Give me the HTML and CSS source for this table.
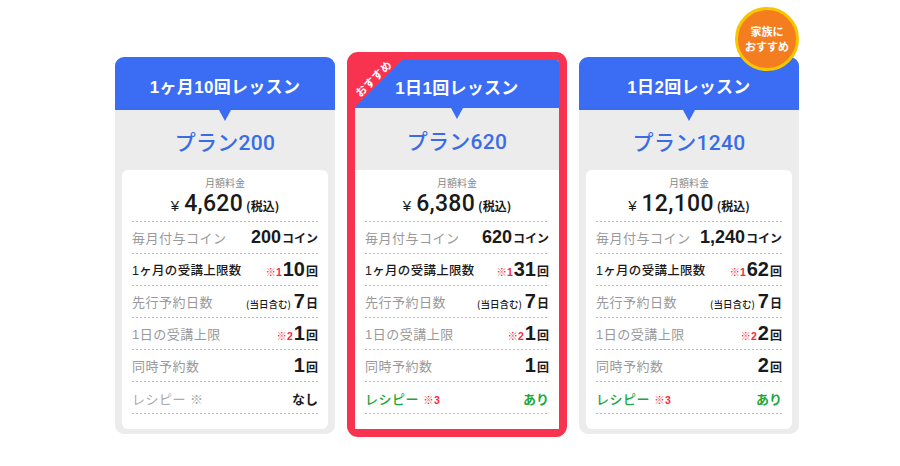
FILE: index.html
```html
<!DOCTYPE html>
<html lang="ja">
<head>
<meta charset="utf-8">
<link rel="stylesheet" href="styles.css">
</head>
<body>
<div class="plans">
  <div class="card">
    <div class="head">1ヶ月10回レッスン</div>
    <div class="title">プラン200</div>
    <div class="box">
      <div class="price">
        <div class="price-label">月額料金</div>
        <div class="price-val"><span class="yen">¥</span><span class="amount">4,620</span><span class="tax">(税込)</span></div>
      </div>
      <div class="row"><span class="label">毎月付与コイン</span><span class="val"><b class="num">200</b><b class="unit">コイン</b></span></div>
      <div class="row"><span class="label dark">1ヶ月の受講上限数</span><span class="val"><span class="note">※1</span><b class="num big">10</b><b class="unit">回</b></span></div>
      <div class="row"><span class="label">先行予約日数</span><span class="val"><span class="small">(当日含む)</span><b class="num big">7</b><b class="unit">日</b></span></div>
      <div class="row"><span class="label">1日の受講上限</span><span class="val"><span class="note">※2</span><b class="num big">1</b><b class="unit">回</b></span></div>
      <div class="row"><span class="label">同時予約数</span><span class="val"><b class="num big">1</b><b class="unit">回</b></span></div>
      <div class="row last"><span class="label light">レシピー ※</span><span class="val"><b class="word">なし</b></span></div>
    </div>
  </div>

  <div class="card featured">
    <div class="head"><span class="ribbon"><span class="ribbon-text">おすすめ</span></span>1日1回レッスン</div>
    <div class="title">プラン620</div>
    <div class="box">
      <div class="price">
        <div class="price-label">月額料金</div>
        <div class="price-val"><span class="yen">¥</span><span class="amount">6,380</span><span class="tax">(税込)</span></div>
      </div>
      <div class="row"><span class="label">毎月付与コイン</span><span class="val"><b class="num">620</b><b class="unit">コイン</b></span></div>
      <div class="row"><span class="label dark">1ヶ月の受講上限数</span><span class="val"><span class="note">※1</span><b class="num big">31</b><b class="unit">回</b></span></div>
      <div class="row"><span class="label">先行予約日数</span><span class="val"><span class="small">(当日含む)</span><b class="num big">7</b><b class="unit">日</b></span></div>
      <div class="row"><span class="label">1日の受講上限</span><span class="val"><span class="note">※2</span><b class="num big">1</b><b class="unit">回</b></span></div>
      <div class="row"><span class="label">同時予約数</span><span class="val"><b class="num big">1</b><b class="unit">回</b></span></div>
      <div class="row last"><span class="label green">レシピー <span class="note">※3</span></span><span class="val"><b class="word green">あり</b></span></div>
    </div>
  </div>

  <div class="card">
    <div class="badge"><span>家族に</span><span>おすすめ</span></div>
    <div class="head">1日2回レッスン</div>
    <div class="title">プラン1240</div>
    <div class="box">
      <div class="price">
        <div class="price-label">月額料金</div>
        <div class="price-val"><span class="yen">¥</span><span class="amount">12,100</span><span class="tax">(税込)</span></div>
      </div>
      <div class="row"><span class="label">毎月付与コイン</span><span class="val"><b class="num">1,240</b><b class="unit">コイン</b></span></div>
      <div class="row"><span class="label dark">1ヶ月の受講上限数</span><span class="val"><span class="note">※1</span><b class="num big">62</b><b class="unit">回</b></span></div>
      <div class="row"><span class="label">先行予約日数</span><span class="val"><span class="small">(当日含む)</span><b class="num big">7</b><b class="unit">日</b></span></div>
      <div class="row"><span class="label">1日の受講上限</span><span class="val"><span class="note">※2</span><b class="num big">2</b><b class="unit">回</b></span></div>
      <div class="row"><span class="label">同時予約数</span><span class="val"><b class="num big">2</b><b class="unit">回</b></span></div>
      <div class="row last"><span class="label green">レシピー <span class="note">※3</span></span><span class="val"><b class="word green">あり</b></span></div>
    </div>
  </div>
</div>
</body>
</html>
```

FILE: styles.css
```css
* { box-sizing: border-box; }
html, body { margin: 0; padding: 0; background: #fff; }
body {
  width: 900px;
  height: 466px;
  overflow: hidden;
  font-family: "Liberation Sans", "Noto Sans CJK JP", sans-serif;
  color: #1a1a1a;
}
.plans {
  display: flex;
  align-items: flex-start;
  gap: 12px;
  padding-left: 115px;
}
.card {
  position: relative;
  width: 220px;
  margin-top: 57px;
  background: #ececec;
  border-radius: 9px;
  padding: 0 7px 5px;
}
.head {
  position: relative;
  margin: 0 -7px;
  height: 53px;
  background: #3a6cf4;
  border-radius: 9px 9px 0 0;
  color: #fff;
  font-size: 17px;
  font-weight: 700;
  display: flex;
  align-items: center;
  justify-content: center;
  padding-top: 4px;
  letter-spacing: 0.3px;
}
.head::after {
  content: "";
  position: absolute;
  left: 50%;
  bottom: -11px;
  margin-left: -6px;
  border-left: 6px solid transparent;
  border-right: 6px solid transparent;
  border-top: 11px solid #3a6cf4;
}
.title {
  height: 60px;
  display: flex;
  align-items: center;
  justify-content: center;
  color: #3a6ce8;
  font-family: "Roboto", "Noto Sans CJK JP", sans-serif;
  font-size: 21px;
  font-weight: 500;
  padding-top: 1px;
  letter-spacing: 0.3px;
}
.box {
  background: #fff;
  border-radius: 6px;
  padding: 0 10px 15px;
}
.price {
  height: 51px;
  padding-top: 6px;
  text-align: center;
}
.price-label {
  font-size: 10px;
  color: #888;
  line-height: 13px;
  font-family: "Noto Sans CJK JP", sans-serif;
}
.price-val {
  display: flex;
  align-items: baseline;
  justify-content: center;
  line-height: 24px;
  margin-top: 3px;
}
.yen { font-size: 15px; font-weight: 400; margin-right: 5px; }
.amount { font-family: "Roboto", sans-serif; font-size: 23px; font-weight: 500; letter-spacing: 0.3px; }
.tax { font-size: 12px; font-weight: 700; margin-left: 3px; font-family: "Noto Sans CJK JP", sans-serif; }
.row {
  height: 32px;
  display: flex;
  align-items: center;
  justify-content: space-between;
  padding-top: 1px;
  background-image: linear-gradient(to right, #bdbdbd 50%, transparent 50%);
  background-size: 4px 1px;
  background-repeat: repeat-x;
  background-position: left top;
}
.row.last {
  background-image: linear-gradient(to right, #bdbdbd 50%, transparent 50%), linear-gradient(to right, #bdbdbd 50%, transparent 50%);
  background-position: left top, left bottom;
  background-size: 4px 1px, 4px 1px;
  background-repeat: repeat-x, repeat-x;
  height: 33px;
}
.label { font-size: 13px; color: #999; letter-spacing: 0.5px; }
.label.dark { color: #1a1a1a; font-weight: 500; font-size: 12.5px; letter-spacing: 0.3px; }
.label.light { color: #aaa; }
.label.green { color: #1aa73a; font-weight: 500; }
.val { display: flex; align-items: baseline; }
.num { font-size: 18px; font-weight: 700; }
.num.big { font-size: 20px; }
.unit { font-size: 12px; font-weight: 700; margin-left: 1px; font-family: "Noto Sans CJK JP", sans-serif; }
.note { font-size: 10.5px; color: #f52a3a; font-weight: 700; margin-right: 1px; }
.small { font-size: 9.5px; margin-right: 3px; font-weight: 500; font-family: "Noto Sans CJK JP", sans-serif; }
.word { font-size: 13px; font-weight: 700; font-family: "Noto Sans CJK JP", sans-serif; }
.word.green { color: #1aa73a; }

.card.featured {
  margin-top: 52px;
  border: 8px solid #f7334f;
  border-radius: 11px;
  padding: 0;
  background: #ececec;
}
.featured .head {
  margin: 0;
  height: 48px;
  border-radius: 3px 3px 0 0;
}
.featured .title { height: 62px; }
.featured .box { border-radius: 0; }

.ribbon {
  position: absolute;
  left: 0;
  top: 0;
  width: 48px;
  height: 48px;
  background: linear-gradient(135deg, #f7334f 50%, transparent 50%);
}
.ribbon-text {
  position: absolute;
  left: -12px;
  top: 12px;
  width: 60px;
  text-align: center;
  white-space: nowrap;
  transform: rotate(-45deg);
  font-size: 11px;
  font-weight: 700;
  color: #fff;
  line-height: 12px;
  letter-spacing: 0.5px;
  font-family: "Noto Sans CJK JP", sans-serif;
}

.badge {
  position: absolute;
  left: 156px;
  top: -50px;
  width: 64px;
  height: 64px;
  border-radius: 50%;
  background: #f47d1f;
  border: 3px solid #f7c600;
  color: #fff;
  font-size: 11px;
  font-weight: 700;
  line-height: 15px;
  display: flex;
  flex-direction: column;
  align-items: center;
  justify-content: center;
  z-index: 2;
  font-family: "Noto Sans CJK JP", sans-serif;
}
```
